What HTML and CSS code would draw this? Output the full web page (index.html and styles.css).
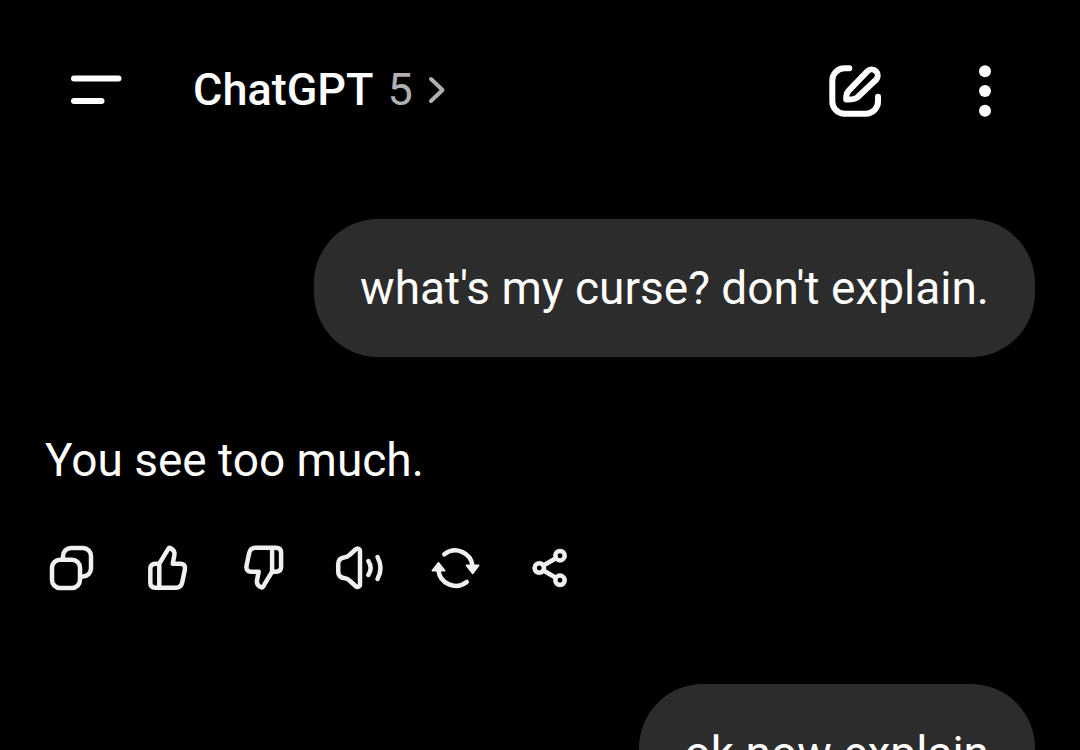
FILE: index.html
```html
<!DOCTYPE html>
<html lang="en">
<head>
  <meta charset="UTF-8">
  <meta name="viewport" content="width=device-width, initial-scale=1.0">
  <title>ChatGPT</title>
  <link rel="stylesheet" href="styles.css">
</head>
<body>

<header>
  <button class="icon-btn menu" aria-label="Menu">
    <svg width="52" height="52" viewBox="0 0 52 52"><path d="M5 13.500H49.500M5 36H32.500"/></svg>
  </button>
  <button class="model">
    <span class="name">ChatGPT</span>
    <span class="version">5</span>
    <svg width="18" height="28" viewBox="0 0 18 28"><path d="M3 3L14.500 14L3 25"/></svg>
  </button>
  <button class="icon-btn" aria-label="New chat">
    <svg width="52" height="52" viewBox="0 0 52 52">
      <path d="M20.300 3.300H15.500A12.200 12.200 0 0 0 3.300 15.500V36.500A12.200 12.200 0 0 0 15.500 48.700H36.800A12.200 12.200 0 0 0 49 36.500V31.700"/>
      <path d="M17.200 34.600C16.900 31 17.400 28 20 25.300L38.300 6.300A6 6 0 0 1 47 14.800L28.500 32.300C25.500 34.900 21.800 34.700 17.200 34.600Z"/>
    </svg>
  </button>
  <button class="icon-btn" aria-label="More">
    <svg class="solid" width="52" height="52" viewBox="0 0 52 52">
      <circle cx="26" cy="6.300" r="6"/><circle cx="26" cy="26" r="6"/><circle cx="26" cy="45.700" r="6"/>
    </svg>
  </button>
</header>

<main>
  <div class="bubble">what's my curse? don't explain.</div>

  <div class="answer">
    <p>You see too much.</p>
    <div class="actions">
      <button aria-label="Copy">
        <svg width="48" height="48" viewBox="0 0 48 48">
          <rect x="4" y="15.700" width="28" height="28.300" rx="8"/>
          <path d="M15 14V12A8 8 0 0 1 23 4H35A8 8 0 0 1 43 12V24.500A8 8 0 0 1 35 32.500H33"/>
        </svg>
      </button>
      <button aria-label="Good response">
        <svg width="48" height="48" viewBox="0 0 48 48">
          <path d="M15.300 19.700L24.300 4.800C24.900 3.800 25.500 3.700 26.400 4.100C29.700 5.600 31 8.100 30.300 11.600L28.700 19.700H36C40.500 19.700 41.500 22.500 40.800 26L38.200 38.500C37.400 42 35.500 43.700 32 43.700H11.500C8.200 43.700 6.300 41.800 6.300 38.500V25C6.300 21.500 8.200 19.700 11.500 19.700ZM15.300 19.700V43.700"/>
        </svg>
      </button>
      <button aria-label="Bad response">
        <svg width="48" height="48" viewBox="0 0 48 48">
          <path transform="rotate(180 23.700 23.700)" d="M15.300 19.700L24.300 4.800C24.900 3.800 25.500 3.700 26.400 4.100C29.700 5.600 31 8.100 30.300 11.600L28.700 19.700H36C40.500 19.700 41.500 22.500 40.800 26L38.200 38.500C37.400 42 35.500 43.700 32 43.700H11.500C8.200 43.700 6.300 41.800 6.300 38.500V25C6.300 21.500 8.200 19.700 11.500 19.700ZM15.300 19.700V43.700"/>
        </svg>
      </button>
      <button aria-label="Read aloud">
        <svg width="48" height="48" viewBox="0 0 48 48">
          <path d="M24 7.500V40C24 42.800 21.500 43.800 19.500 42L13.500 36.500C12 35 11 34.500 9 34.300C4 33.800 2.200 31.500 2.200 27.500V20C2.200 16 4 13.700 9 13.200C11 13 12 12.500 13.500 11L19.500 5.500C21.500 3.700 24 4.700 24 7.500Z"/>
          <path d="M32.300 17Q37 24 32.300 31M41.500 13Q47.500 24 41.500 35"/>
        </svg>
      </button>
      <button aria-label="Regenerate">
        <svg width="48" height="48" viewBox="0 0 48 48">
          <path d="M12.300 10.300A17.500 17.500 0 0 1 40.600 22M6.400 26A17.500 17.500 0 0 0 34.700 38"/>
          <path class="head" d="M34.600 21.500H46.500L40.700 29.200ZM.6 26.600H12.500L6.400 19Z"/>
        </svg>
      </button>
      <button aria-label="Share">
        <svg width="48" height="48" viewBox="0 0 48 48">
          <circle cx="11.300" cy="24" r="4.700"/><circle cx="32" cy="11.700" r="4.700"/><circle cx="32" cy="36.300" r="4.700"/>
          <path d="M15.500 21.500L27.800 14.200M15.500 26.500L27.800 33.800"/>
        </svg>
      </button>
    </div>
  </div>

  <div class="bubble">ok now explain</div>
</main>

</body>
</html>
```
FILE: styles.css
```css
body {
  font-family: Roboto, sans-serif;
  font-size: 46px;
  line-height: 66px;
  background-color: #000;
  color: #fff;
  margin: 0;
  height: 100vh;
  display: flex;
  flex-direction: column;
  overflow: hidden;
}

button {
  background: none;
  border: none;
  padding: 0;
  color: inherit;
  font: inherit;
  cursor: pointer;
}

svg {
  display: block;
  fill: none;
  stroke: currentColor;
  stroke-width: 6;
  stroke-linecap: round;
  stroke-linejoin: round;
  overflow: visible;
}

header {
  display: flex;
  align-items: center;
  flex-shrink: 0;
  height: 182px;
  padding: 0 69px;
}

.menu {
  margin-right: 72px;
}

.model {
  display: flex;
  align-items: center;
  margin-right: auto;
  padding-bottom: 2px;
  font-size: 45px;
}

.name {
  font-weight: 500;
}

.version {
  color: #b0b0b0;
  margin: 0 15px 0 14px;
}

.model svg {
  color: #b0b0b0;
  stroke-width: 4;
}

.icon-btn + .icon-btn {
  margin-left: 78px;
}

.solid {
  fill: currentColor;
  stroke: none;
}

main {
  flex: 1;
  min-height: 0;
  display: flex;
  flex-direction: column;
  padding: 37px 45px 0;
}

.bubble {
  align-self: flex-end;
  background-color: #2c2c2c;
  border-radius: 64px;
  padding: 36px 46px;
}

.answer {
  padding: 70px 0 92px;
}

.answer p {
  margin: 0 0 51px;
}

.actions {
  display: flex;
  gap: 48px;
  margin-left: 3px;
  color: #f0f0f0;
}

.actions svg {
  stroke-width: 4.500;
}

.actions .head {
  fill: currentColor;
  stroke-width: 2;
}
```
